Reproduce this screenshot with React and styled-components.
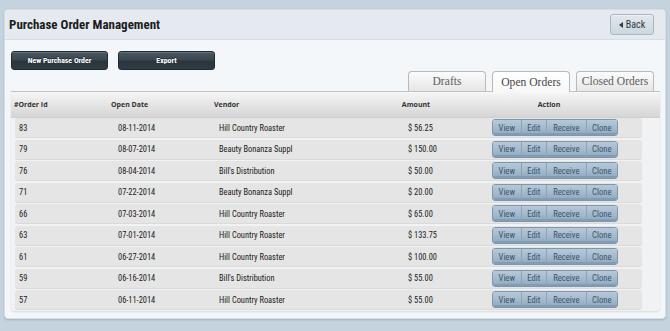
import React from "react";
import styled, { createGlobalStyle } from "styled-components";

const NARROW = '"Roboto Condensed", "Liberation Sans Narrow", "Liberation Sans", Arial, sans-serif';

const Global = createGlobalStyle`
  html, body { margin: 0; padding: 0; background: #c5d3de; }
  body { width: 670px; height: 331px; overflow: hidden; font-family: ${NARROW}; }
`;

const Page = styled.div`
  padding: 9px 4px 0 4px;
`;

const Panel = styled.div`
  height: 310px;
  box-sizing: border-box;
  background: #f4f7f9;
  border: 1px solid #d7dee5;
  border-radius: 4px;
  box-shadow: 0 1px 2px rgba(60, 80, 100, 0.25);
  display: flex;
  flex-direction: column;
  overflow: hidden;
`;

const PanelHeader = styled.div`
  height: 30px;
  flex: none;
  box-sizing: border-box;
  display: flex;
  align-items: center;
  justify-content: space-between;
  padding: 0 11px 0 4px;
  background: #e4eaef;
  border-bottom: 1px solid #d6dde3;
`;

const Title = styled.h1`
  margin: 0;
  font-family: ${NARROW};
  font-weight: bold;
  font-size: 13px;
  color: #1c1c1c;
`;

const BackButton = styled.button`
  width: 44px;
  height: 21px;
  box-sizing: border-box;
  display: flex;
  align-items: center;
  justify-content: center;
  gap: 3px;
  padding: 0;
  font-family: ${NARROW};
  font-size: 10px;
  color: #2e3a44;
  background: linear-gradient(#e2e8ed, #ccd6de);
  border: 1px solid #a9b6c1;
  border-radius: 3px;
  box-shadow: inset 0 1px 0 #eef2f5;
`;

const Body = styled.div`
  flex: 1;
  display: flex;
  flex-direction: column;
  padding: 11px 5px 0 6px;
`;

const Toolbar = styled.div`
  display: flex;
  gap: 10px;
  height: 19px;
`;

const DarkButton = styled.button`
  width: 97px;
  height: 19px;
  box-sizing: border-box;
  padding: 0;
  font-family: ${NARROW};
  font-weight: bold;
  font-size: 7.8px;
  color: #fff;
  background: linear-gradient(#4a5862 0%, #3a4750 45%, #2a353d 55%, #2f3b43 100%);
  border: 1px solid #1f2a31;
  border-radius: 3px;
  box-shadow: inset 0 1px 0 rgba(255, 255, 255, 0.15);
  text-shadow: 0 -1px 0 rgba(0, 0, 0, 0.4);
`;

const Tabs = styled.div`
  display: flex;
  justify-content: flex-end;
  gap: 6px;
  margin-top: 1px;
  padding-right: 6px;
  height: 20px;
`;

const Tab = styled.div`
  width: 78px;
  height: ${(p) => (p.$active ? "21px" : "20px")};
  box-sizing: border-box;
  display: flex;
  align-items: center;
  justify-content: center;
  font-family: "Liberation Serif", "Times New Roman", serif;
  font-size: 11.6px;
  color: ${(p) => (p.$active ? "#484848" : "#5e5e5e")};
  background: ${(p) => (p.$active ? "linear-gradient(#ffffff, #f7f7f7)" : "linear-gradient(#fbfbfb, #e6e6e6)")};
  border: 1px solid #b9b9b9;
  border-bottom: none;
  border-radius: 4px 4px 0 0;
  position: relative;
  z-index: ${(p) => (p.$active ? 2 : 1)};
`;

const Table = styled.div`
  width: 649px;
  background: #f1f2f3;
  border-radius: 0 0 4px 4px;
  box-shadow: 0 1px 2px rgba(0, 0, 0, 0.12);
  padding-bottom: 2px;
`;

const HeadRow = styled.div`
  height: 27px;
  box-sizing: border-box;
  display: grid;
  grid-template-columns: 97px 103px 176px 52px 214px;
  align-items: center;
  padding-left: 3px;
  background: linear-gradient(#f6f6f6, #d5d5d5);
  border-top: 1px solid #c2c2c2;
  border-bottom: 1px solid #cfcfcf;
`;

const HeadCell = styled.div`
  font-family: "Open Sans", "DejaVu Sans", sans-serif;
  font-weight: bold;
  font-size: 7px;
  color: #333;
  text-align: ${(p) => (p.$center ? "center" : "left")};
  white-space: nowrap;
`;

const Rows = styled.div`
  display: flex;
  flex-direction: column;
  gap: 2.5px;
  padding: 0 18px 0 4px;
`;

const Row = styled.div`
  height: 19px;
  box-sizing: border-box;
  display: grid;
  grid-template-columns: 99px 101px 189px 84px auto;
  align-items: center;
  padding-left: 4px;
  background: #e5e5e5;
  border-radius: 3px;
  box-shadow: 0 1px 0 #dadada;
`;

const Cell = styled.div`
  font-family: ${NARROW};
  font-size: 8.4px;
  color: #1a1a1a;
  white-space: nowrap;
`;

const ActionGroup = styled.div`
  display: flex;
  height: 17px;
  box-sizing: border-box;
  border: 1px solid #7e97ad;
  border-radius: 3px;
  overflow: hidden;
  width: 126px;
`;

const ActionButton = styled.button`
  width: ${(p) => p.$w}px;
  height: 100%;
  padding: 0;
  font-family: ${NARROW};
  font-size: 8.6px;
  color: #3b546b;
  background: linear-gradient(#b6c9d9 0%, #a3b9cc 55%, #8ea8bf 100%);
  border: none;
  border-left: ${(p) => (p.$first ? "none" : "1px solid #8ba2b7")};
  box-shadow: inset 0 -2px 0 #819db5;
`;

const orders = [
  ["83", "08-11-2014", "Hill Country Roaster", "$ 56.25"],
  ["79", "08-07-2014", "Beauty Bonanza Suppl", "$ 150.00"],
  ["76", "08-04-2014", "Bill's Distribution", "$ 50.00"],
  ["71", "07-22-2014", "Beauty Bonanza Suppl", "$ 20.00"],
  ["66", "07-03-2014", "Hill Country Roaster", "$ 65.00"],
  ["63", "07-01-2014", "Hill Country Roaster", "$ 133.75"],
  ["61", "06-27-2014", "Hill Country Roaster", "$ 100.00"],
  ["59", "06-16-2014", "Bill's Distribution", "$ 55.00"],
  ["57", "06-11-2014", "Hill Country Roaster", "$ 55.00"],
];

const actions = [
  ["View", 28],
  ["Edit", 26],
  ["Receive", 40],
  ["Clone", 32],
];

export default function App() {
  return (
    <>
      <Global />
      <Page>
        <Panel>
          <PanelHeader>
            <Title>Purchase Order Management</Title>
            <BackButton>
              <svg width="4" height="6" viewBox="0 0 4 6">
                <path d="M4 0 L0 3 L4 6 Z" fill="#2e3a44" />
              </svg>
              Back
            </BackButton>
          </PanelHeader>
          <Body>
            <Toolbar>
              <DarkButton>New Purchase Order</DarkButton>
              <DarkButton>Export</DarkButton>
            </Toolbar>
            <Tabs>
              <Tab>Drafts</Tab>
              <Tab $active>Open Orders</Tab>
              <Tab>Closed Orders</Tab>
            </Tabs>
            <Table>
              <HeadRow>
                <HeadCell>#Order Id</HeadCell>
                <HeadCell>Open Date</HeadCell>
                <HeadCell>Vendor</HeadCell>
                <HeadCell $center>Amount</HeadCell>
                <HeadCell $center>Action</HeadCell>
              </HeadRow>
              <Rows>
                {orders.map(([id, date, vendor, amount]) => (
                  <Row key={id}>
                    <Cell>{id}</Cell>
                    <Cell>{date}</Cell>
                    <Cell>{vendor}</Cell>
                    <Cell>{amount}</Cell>
                    <ActionGroup>
                      {actions.map(([label, w], i) => (
                        <ActionButton key={label} $w={w} $first={i === 0}>
                          {label}
                        </ActionButton>
                      ))}
                    </ActionGroup>
                  </Row>
                ))}
              </Rows>
            </Table>
          </Body>
        </Panel>
      </Page>
    </>
  );
}
